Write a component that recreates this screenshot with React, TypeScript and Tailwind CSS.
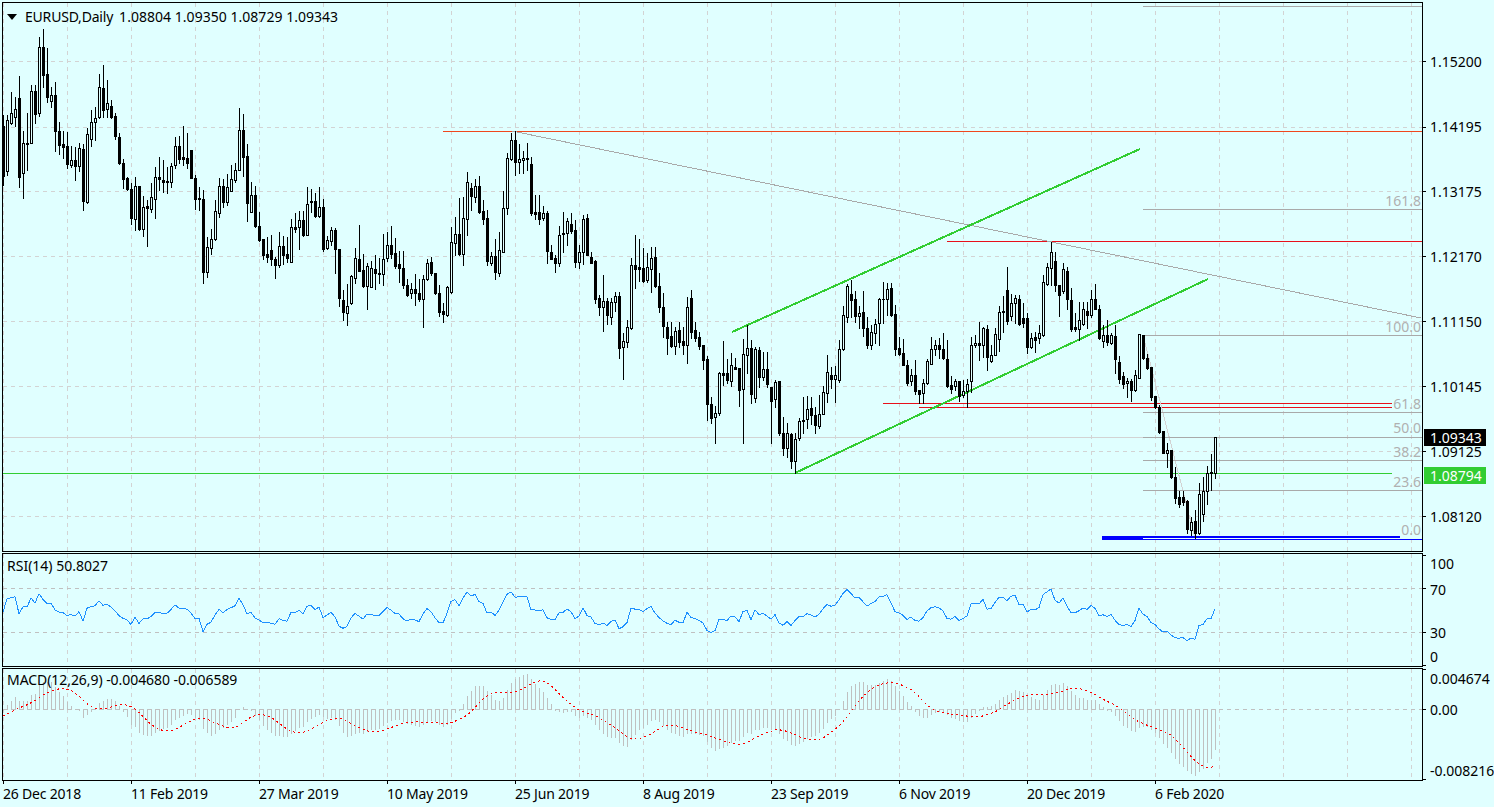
import * as React from "react";

type Row = number[];
type Candle = { x: number; h: number; t: number; b: number; l: number; up: boolean };

const BG = "#e0ffff";

// [high, bodyTop, bodyBottom, low, hollow] read off the chart, y0 is the crop offset (3x)
const part1: Row[] = [
  [345,378,528,555,0],[345,360,512,525,1],[275,340,370,372,1],[290,328,352,378,1],[228,295,530,560,0],
  [393,430,520,593,1],[338,428,431,510,0],[255,274,428,430,1],[255,272,342,370,0],[110,142,338,348,1],
  [88,142,225,260,0],[145,222,290,305,0],[260,285,302,320,1],[245,285,392,452,0],[365,392,435,462,0],
  [392,432,442,475,0],[397,438,492,505,0],[438,480,495,500,1],[440,480,497,540,0],[428,445,497,512,1],
  [432,447,603,630,0],[385,403,605,608,1],[330,367,416,438,1],[320,355,365,420,1],[222,262,352,353,1],
  [195,265,330,350,0],[240,310,328,352,1],[300,318,350,355,0],[340,348,408,418,0],[398,412,490,492,0],
  [478,490,536,565,0],[530,535,566,570,0],[548,568,655,672,0],[530,558,656,690,1],[558,558,688,690,0],
  [588,620,688,708,1],[600,618,625,738,0],[548,592,626,635,1],[500,532,596,655,1],[470,532,538,570,0],
  [480,540,545,575,0],[500,542,546,578,0],[488,498,545,560,1],[410,438,496,505,1],[408,438,476,490,0],
  [378,470,476,495,0],[400,474,488,505,0],[450,450,533,535,0],
];
const part2: Row[] = [
  [135,144,207,237,0],[172,205,208,240,0],[180,208,425,458,0],[322,350,425,440,1],[298,328,355,372,1],
  [210,244,327,330,1],[145,169,248,262,1],[148,168,215,230,0],[133,172,216,225,1],[105,148,182,184,1],
  [98,121,150,155,1],[-66,0,121,121,1],[-48,0,80,137,0],[42,78,218,272,0],[157,195,245,245,1],
  [168,195,288,290,0],[246,288,330,333,0],[327,327,375,387,0],[320,372,380,395,0],[315,361,388,405,0],
  [382,388,404,444,0],[307,349,404,410,1],[318,348,374,402,0],[320,373,384,395,0],[266,292,395,396,1],
  [250,292,296,305,0],[243,271,292,356,1],[243,270,315,318,0],[172,223,314,315,1],[178,213,216,245,0],
  [188,213,258,262,0],[172,232,258,260,1],[208,232,356,362,0],[318,331,355,357,1],[292,301,334,345,1],
  [295,300,358,428,0],[358,358,503,528,0],[480,511,545,570,0],[462,529,548,585,1],[435,438,520,522,1],
  [354,385,443,458,1],[285,388,422,424,0],[372,420,468,472,0],[400,408,468,536,1],[392,415,470,472,1],
  [376,418,428,476,0],[385,428,431,460,0],[312,388,431,465,1],[305,345,385,392,1],[288,345,372,385,0],
  [325,369,408,413,0],[362,402,413,455,0],
];
const part3: Row[] = [
  [393,445,495,505,0],[478,495,525,528,0],[490,508,520,535,1],[462,508,518,555,0],[478,520,538,542,0],
  [465,478,538,620,1],[418,430,478,480,1],[412,427,458,466,0],[460,460,520,522,0],[495,520,575,587,0],
  [548,574,581,605,0],[497,502,584,587,1],[320,367,517,518,1],[292,343,368,405,1],[235,343,403,405,0],
  [232,295,403,435,1],[157,187,298,345,1],[190,205,228,270,0],[178,198,230,245,1],[167,198,275,278,0],
  [240,272,296,312,0],[270,295,422,436,0],[395,408,428,435,1],[358,408,455,478,0],[335,390,458,468,1],
  [212,265,395,395,1],[98,115,265,282,1],[40,60,118,120,1],[33,60,125,165,0],[72,117,125,158,1],
  [92,114,120,158,1],[68,114,116,150,0],[110,132,278,285,0],[225,276,282,298,0],[225,276,296,312,0],
  [258,280,294,300,1],[272,279,392,428,0],[375,396,416,418,0],[405,415,428,455,0],[318,345,428,438,1],
  [275,338,342,395,0],[295,303,338,375,1],[280,312,332,340,0],[300,330,425,440,0],[375,397,425,443,1],
  [285,298,395,432,1],[283,295,405,405,0],[395,410,428,430,0],[420,424,536,548,0],[525,535,560,585,0],
  [465,544,560,632,1],[535,544,585,612,0],[533,547,590,612,1],[515,528,547,572,1],[515,528,683,714,0],
  [640,664,680,776,1],[600,622,665,680,1],[415,436,624,628,1],[346,436,446,504,0],[358,442,446,482,0],
  [385,444,482,485,0],[398,442,480,486,1],[380,415,446,515,1],[382,412,498,500,0],[460,498,560,575,0],
  [518,562,617,650,0],[605,622,653,702,0],[607,648,678,680,0],[620,634,678,702,1],[605,630,666,680,0],
  [620,664,674,702,0],[530,562,674,728,1],[510,535,635,655,0],[605,630,654,662,0],[636,652,678,688,0],
  [676,676,720,746,0],[708,718,851,900,0],[832,853,893,908,0],[858,880,892,970,1],[755,760,878,885,1],
  [663,760,764,795,0],[718,760,780,790,0],[698,736,782,798,1],[714,740,746,748,0],[744,744,810,858,0],
  [658,703,808,968,1],[614,685,704,760,1],[660,685,822,850,0],[680,688,833,845,1],[682,690,770,800,0],
  [695,748,772,780,1],[697,747,792,800,0],[800,802,842,968,0],[780,786,838,860,1],[784,784,938,945,0],
  [890,940,984,1005,0],[908,940,984,1012,1],[940,942,1022,1045,0],[938,958,1022,1060,1],[895,903,955,960,1],
];
const part4: Row[] = [
  [530,600,603,640,0],[528,568,598,625,1],[532,565,585,612,0],[560,585,615,640,0],[525,583,617,625,1],
  [498,517,582,582,1],[405,457,518,545,1],[440,466,476,505,0],[437,466,478,545,1],[360,388,480,485,1],
  [258,286,388,390,1],[192,198,290,305,1],[180,222,240,290,0],[212,238,288,305,0],[258,278,288,325,1],
  [212,277,325,348,0],[290,325,375,385,0],[315,335,375,386,1],[298,312,338,368,1],[235,238,310,374,1],
  [187,236,238,310,0],[190,208,237,285,1],[190,205,285,288,0],[255,283,386,404,0],[350,385,403,405,0],
  [358,400,435,436,0],[420,435,490,495,0],[447,466,482,495,1],[420,466,513,522,0],[510,510,522,548,0],
  [478,490,520,550,1],[418,423,490,492,1],[352,388,433,433,1],[360,376,388,405,1],[355,376,388,415,0],
  [338,388,414,418,0],[360,418,497,500,0],[468,495,506,520,0],[476,484,498,510,1],[482,484,528,542,0],
  [480,514,524,530,1],[478,492,514,562,1],[350,376,482,515,1],[345,370,376,380,1],[305,370,376,420,0],
  [320,324,376,412,1],[315,328,410,450,0],[375,404,422,425,1],[325,342,404,405,1],[258,277,356,392,1],
  [228,272,275,335,0],[142,210,302,312,0],[222,250,288,300,1],[225,235,250,310,1],[225,236,312,315,0],
  [250,295,310,320,0],[280,295,382,398,0],[340,355,380,385,1],[335,352,360,395,0],[315,340,355,368,1],
  [165,186,346,348,1],[130,142,192,195,1],[65,97,145,195,1],[95,124,194,212,0],[195,196,226,288,0],
  [130,148,214,220,1],[140,154,236,268,0],[203,240,326,332,0],[280,322,328,332,0],[245,300,328,360,1],
  [245,268,312,315,1],[245,272,284,325,0],[210,238,286,290,1],[192,238,266,268,0],[255,268,355,358,0],
  [315,346,362,382,1],[300,345,366,375,0],[340,346,370,372,1],[315,348,416,458,0],[408,426,476,490,0],
  [456,468,491,505,0],[475,484,490,530,1],[478,482,510,542,0],[450,466,510,512,1],[343,343,473,475,1],
  [345,345,414,416,0],[402,414,444,446,0],[442,442,530,540,0],[528,528,562,565,0],[555,560,636,640,0],
  [632,632,698,700,0],[668,691,698,740,1],[690,690,770,775,0],
];
const part5: Row[] = [
  [440,472,534,548,0],[512,532,553,560,0],[512,532,545,555,0],[540,544,628,640,0],[590,605,630,645,1],
  [570,604,640,655,0],[490,522,640,642,1],[472,512,582,602,1],[438,458,512,552,1],[402,456,458,510,0],
  [352,352,458,474,1],
];

const toCandles = (y0: number, rows: Row[], from: number): Candle[] =>
  rows.map((r, n) => ({
    x: 3 + 4 * (from + n),
    h: Math.round(y0 + r[0] / 3),
    t: Math.round(y0 + r[1] / 3),
    b: Math.round(y0 + r[2] / 3),
    l: Math.round(y0 + r[3] / 3),
    up: r[4] === 1,
  }));

const candles: Candle[] = [
  ...toCandles(0, part1, 0),
  ...toCandles(130, part2, 48),
  ...toCandles(120, part3, 100),
  ...toCandles(220, part4, 200),
  ...toCandles(320, part5, 293),
];

const closes = candles.map((c) => (c.up ? c.t : c.b));

// RSI(14) from the closes, wilder smoothing, seeded to where the pane starts
function calcRsi() {
  let gain = 7;
  let loss = 7.5;
  return closes.map((c, i) => {
    if (i > 0) {
      const d = closes[i - 1] - c;
      gain = (gain * 13 + Math.max(d, 0)) / 14;
      loss = (loss * 13 + Math.max(-d, 0)) / 14;
    }
    return (100 * gain) / (gain + loss);
  });
}

// MACD(12,26,9) in price units, price per pixel comes from the axis labels
function calcMacd() {
  const k = 0.0001556;
  let e12 = closes[0] - 12;
  let e26 = closes[0] - 12;
  const main: number[] = [];
  const prev = [-0.0012, -0.0011, -0.001, -0.0009, -0.0008, -0.0007, -0.0006, -0.0005];
  const signal: number[] = [];
  closes.forEach((c) => {
    e12 += (c - e12) * (2 / 13);
    e26 += (c - e26) * (2 / 27);
    const m = (e26 - e12) * k;
    main.push(m);
    const all = [...prev, ...main].slice(-9);
    signal.push(all.reduce((a, b) => a + b, 0) / 9);
  });
  return { main, signal };
}

const rsi = calcRsi();
const macd = calcMacd();

const gridX = Array.from({ length: 23 }, (_, i) => 3 + 64 * i);
const priceLabels = [
  ["1.15200", 62, 61],
  ["1.14195", 127, 127],
  ["1.13175", 192, 191],
  ["1.12170", 257, 256],
  ["1.11150", 322, 321],
  ["1.10145", 387, 386],
  ["1.09125", 452, 451],
  ["1.08120", 517, 516],
] as const;
const fibLines = [6, 209, 335, 412, 437, 460, 490];
const fibLabels = [
  ["161.8", 201],
  ["100.0", 327],
  ["61.8", 404],
  ["50.0", 428],
  ["38.2", 452],
  ["23.6", 482],
  ["0.0", 530],
] as const;
const dates = [
  "26 Dec 2018",
  "11 Feb 2019",
  "27 Mar 2019",
  "10 May 2019",
  "25 Jun 2019",
  "8 Aug 2019",
  "23 Sep 2019",
  "6 Nov 2019",
  "20 Dec 2019",
  "6 Feb 2020",
];

function VGrid({ y1, y2 }: { y1: number; y2: number }) {
  return (
    <>
      {gridX.map((x) => (
        <line key={x} x1={x + 0.5} x2={x + 0.5} y1={y1} y2={y2} stroke="#d3d3d3" strokeDasharray="4 4" />
      ))}
    </>
  );
}

function HGrid({ y, color = "#d3d3d3" }: { y: number; color?: string }) {
  return <line x1={3} x2={1422} y1={y + 0.5} y2={y + 0.5} stroke={color} strokeDasharray="4 4" />;
}

function PriceChart() {
  return (
    <svg width={1419} height={548} viewBox="3 3 1419 548" className="block" shapeRendering="crispEdges">
      <VGrid y1={3} y2={551} />
      {priceLabels.map(([t, , y]) => (
        <HGrid key={t} y={y} />
      ))}

      {/* objects */}
      <rect x={3} y={437} width={1140} height={1} fill="#d3d3d3" />
      <rect x={3} y={473} width={1389} height={1} fill="#32cd32" />
      <rect x={443} y={131} width={979} height={1} fill="#f0471d" />
      <rect x={947} y={241} width={475} height={1} fill="#e8101a" />
      <rect x={883} y={403} width={509} height={1} fill="#e8101a" />
      <rect x={919} y={407} width={473} height={1} fill="#e8101a" />
      <line x1={512} y1={131} x2={1421} y2={318} stroke="#a9a9a9" />
      <line x1={732} y1={332} x2={1140} y2={149} stroke="#32cd32" strokeWidth={2} />
      <line x1={795} y1={473} x2={1208} y2={279} stroke="#32cd32" strokeWidth={2} />
      <line x1={1143} y1={335} x2={1195} y2={538} stroke="#d3d3d3" />
      {fibLines.map((y) => (
        <rect key={y} x={1143} y={y} width={279} height={1} fill="#a9a9a9" />
      ))}
      <rect x={1102} y={536} width={298} height={2} fill="#0000ff" />
      <rect x={1102} y={538} width={41} height={2} fill="#0000ff" />
      <rect x={1143} y={539} width={279} height={1} fill="#0000ff" />

      {/* candles */}
      {candles.map((c) => (
        <g key={c.x}>
          <rect x={c.x} y={c.h} width={1} height={c.l - c.h + 1} fill="#000" />
          <rect x={c.x - 1} y={c.t} width={3} height={c.b - c.t + 1} fill="#000" />
          {c.up && c.b - c.t > 1 && <rect x={c.x} y={c.t + 1} width={1} height={c.b - c.t - 1} fill={BG} />}
        </g>
      ))}
    </svg>
  );
}

function RsiChart() {
  const pts = rsi.map((v, i) => `${3 + 4 * i},${(610 - (v - 50) * 1.1).toFixed(1)}`).join(" ");
  return (
    <svg width={1419} height={112} viewBox="3 554 1419 112" className="block" shapeRendering="crispEdges">
      <VGrid y1={554} y2={666} />
      <HGrid y={588} color="#c0c0c0" />
      <HGrid y={632} color="#c0c0c0" />
      <polyline points={pts} fill="none" stroke="#1e90ff" />
    </svg>
  );
}

function MacdChart() {
  const toY = (v: number) => 709 - v / 0.000116;
  const pts = macd.signal.map((v, i) => `${3 + 4 * i},${toY(v).toFixed(1)}`).join(" ");
  return (
    <svg width={1419} height={111} viewBox="3 669 1419 111" className="block" shapeRendering="crispEdges">
      <VGrid y1={669} y2={780} />
      <HGrid y={709} color="#c0c0c0" />
      {macd.main.map((v, i) => {
        const y = Math.round(toY(v));
        return (
          <rect key={i} x={3 + 4 * i} y={Math.min(y, 709)} width={1} height={Math.abs(y - 709) + 1} fill="#c0c0c0" />
        );
      })}
      <polyline points={pts} fill="none" stroke="#ff0000" strokeDasharray="2 3" />
    </svg>
  );
}

function AxisLabel({ text, top, tick }: { text: string; top: number; tick?: number }) {
  return (
    <>
      <span className="absolute left-[7px] leading-[12px] text-black" style={{ top: top + 2 }}>
        {text}
      </span>
      {tick !== undefined && <span className="absolute left-0 h-px w-[3px] bg-black" style={{ top: tick }} />}
    </>
  );
}

export default function App() {
  return (
    <div className="h-[807px] w-[1494px] overflow-hidden bg-[#e0ffff] pt-[2px] font-['Noto_Sans',sans-serif] text-[14px] text-black">
      {/* price pane */}
      <div className="flex h-[550px]">
        <div className="relative ml-[2px] h-[550px] w-[1421px] border border-black">
          <PriceChart />
          <div className="absolute left-[4px] top-[6px] flex items-center leading-[16px]">
            <span className="h-0 w-0 border-x-[5px] border-t-[6px] border-x-transparent border-t-black" />
            <span className="ml-[8px] tracking-[-0.2px]">EURUSD,Daily</span>
            <span className="ml-[6px] tracking-[0.03px]">1.08804 1.09350 1.08729 1.09343</span>
          </div>
          {fibLabels.map(([t, y]) => (
            <span key={t} className="absolute right-[1px] leading-[16px] text-[#b0b0b0]" style={{ top: y - 11 }}>
              {t}
            </span>
          ))}
        </div>
        <div className="relative w-[71px]">
          {priceLabels.map(([t, y, tick]) => (
            <AxisLabel key={t} text={t} top={y - 10} tick={tick - 2} />
          ))}
          <div className="absolute left-[1px] top-[427px] h-[17px] w-[62px] bg-black pl-[6px] leading-[17px] text-white">
            1.09343
          </div>
          <div className="absolute left-[1px] top-[465px] h-[17px] w-[62px] bg-[#32cd32] pl-[6px] leading-[17px] text-white">
            1.08794
          </div>
        </div>
      </div>

      {/* rsi pane */}
      <div className="mt-px flex h-[114px]">
        <div className="relative ml-[2px] h-[114px] w-[1421px] border border-black">
          <RsiChart />
          <span className="absolute left-[4px] top-[4px] leading-[16px]">RSI(14) 50.8027</span>
        </div>
        <div className="relative w-[71px]">
          <AxisLabel text="100" top={3} tick={2} />
          <AxisLabel text="70" top={29} tick={35} />
          <AxisLabel text="30" top={72} tick={79} />
          <AxisLabel text="0" top={96} tick={112} />
        </div>
      </div>

      {/* macd pane */}
      <div className="mt-px flex h-[113px]">
        <div className="relative ml-[2px] h-[113px] w-[1421px] border border-black">
          <MacdChart />
          <span className="absolute left-[4px] top-[3px] tracking-[-0.06px] leading-[16px]">MACD(12,26,9) -0.004680 -0.006589</span>
        </div>
        <div className="relative w-[71px]">
          <AxisLabel text="0.004674" top={3} tick={1} />
          <AxisLabel text="0.00" top={34} tick={41} />
          <AxisLabel text="-0.008216" top={95} tick={111} />
        </div>
      </div>

      {/* date axis */}
      <div className="ml-[3px] flex tracking-[-0.2px]">
        {dates.map((d) => (
          <div key={d} className="relative h-[26px] w-[128px] shrink-0 leading-[26px]">
            <span className="absolute left-0 top-0 h-[3px] w-px bg-black" />
            {d}
          </div>
        ))}
      </div>
    </div>
  );
}
